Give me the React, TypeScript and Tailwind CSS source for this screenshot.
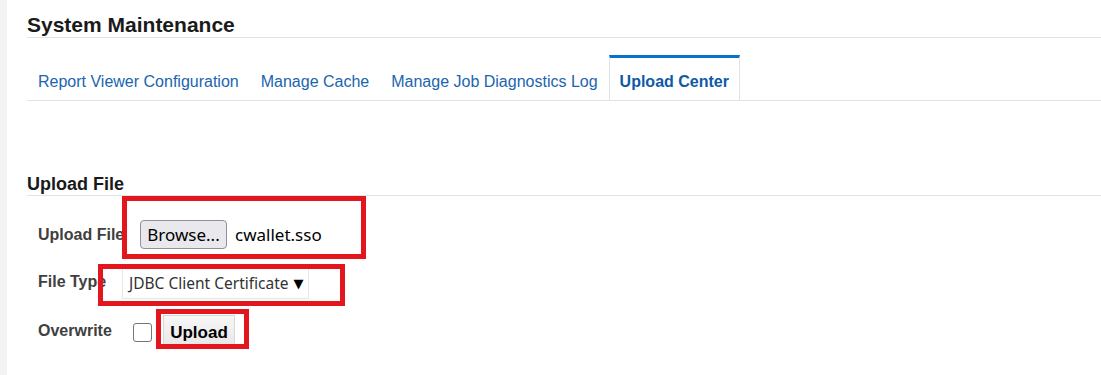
import React from "react";

const tabs = [
  { label: "Report Viewer Configuration", active: false },
  { label: "Manage Cache", active: false },
  { label: "Manage Job Diagnostics Log", active: false },
  { label: "Upload Center", active: true },
];

export default function App() {
  return (
    <div className="relative flex w-[1101px] h-[375px] overflow-hidden bg-white font-['Liberation_Sans',Arial,sans-serif]">
      <div className="w-[7px] shrink-0 bg-[#f3f3f3]" />
      <div className="flex-1 pl-[20px]">
        <h1 className="pt-[13px] text-[21px] leading-[24px] font-bold text-[#1a1a1a] border-b border-[#dfe4ea]">
          System Maintenance
        </h1>

        <div className="mt-[17px] flex border-b border-[#dfe4ea]">
          {tabs.map((t) => (
            <div
              key={t.label}
              className={
                t.active
                  ? "h-[45px] px-[10px] pt-[14px] border-t-[3px] border-x border-t-[#0572ce] border-x-[#dfe4ea] text-[16px] leading-[20px] font-bold text-[#0e5aa7] whitespace-nowrap"
                  : "h-[45px] px-[10px] pt-[14px] border-t-[3px] border-x border-transparent text-[16px] leading-[20px] text-[#1a65b0] whitespace-nowrap"
              }
            >
              {t.label}
            </div>
          ))}
        </div>

        <h2 className="mt-[73px] text-[18px] leading-[21px] font-bold text-[#1a1a1a] border-b border-[#dfe4ea]">
          Upload File
        </h2>

        <div className="pl-[11px]">
          <div className="mt-[24px] flex h-[29px] items-center">
            <div className="w-[84px] whitespace-nowrap text-[16px] font-bold text-[#404040]">
              Upload File
            </div>
            <div className="ml-[18px] flex items-center font-['Noto_Sans',sans-serif] text-[17px] text-black">
              <button className="h-[29px] w-[87px] rounded-[4px] border border-[#8f8f9d] bg-[#e9e9ed] leading-none text-black">
                Browse...
              </button>
              <span className="ml-[8px]">cwallet.sso</span>
            </div>
          </div>

          <div className="mt-[19px] flex h-[31px] items-center">
            <div className="w-[84px] whitespace-nowrap pb-[3px] text-[16px] font-bold text-[#404040]">
              File Type
            </div>
            <div className="flex h-[31px] w-[187px] items-center border border-[#e6e6e6] bg-white pl-[6px] font-['Noto_Sans',sans-serif] text-[15.5px] text-[#333]">
              JDBC Client Certificate
              <span className="ml-[5px] font-['DejaVu_Sans',sans-serif] text-[13px] leading-none text-black">▼</span>
            </div>
          </div>

          <div className="mt-[16px] flex h-[32px] items-center">
            <div className="w-[84px] whitespace-nowrap text-[16px] font-bold text-[#404040]">
              Overwrite
            </div>
            <div className="ml-[11px] mt-[2px] h-[19px] w-[19px] rounded-[3px] border border-[#767676] bg-white" />
            <button className="ml-[11px] h-[32px] w-[72px] border border-[#d8d8d8] bg-gradient-to-b from-[#f7f7f7] to-[#e8e8e8] pt-[4px] text-[17px] leading-[20px] font-bold text-black">
              Upload
            </button>
          </div>
        </div>
      </div>

      <div className="absolute left-[122px] top-[196px] h-[63px] w-[244px] border-[5px] border-[#e3161d]" />
      <div className="absolute left-[98px] top-[264px] h-[42px] w-[247px] border-[5px] border-[#e3161d]" />
      <div className="absolute left-[156px] top-[309px] h-[40px] w-[93px] border-[5px] border-[#e3161d]" />
    </div>
  );
}
